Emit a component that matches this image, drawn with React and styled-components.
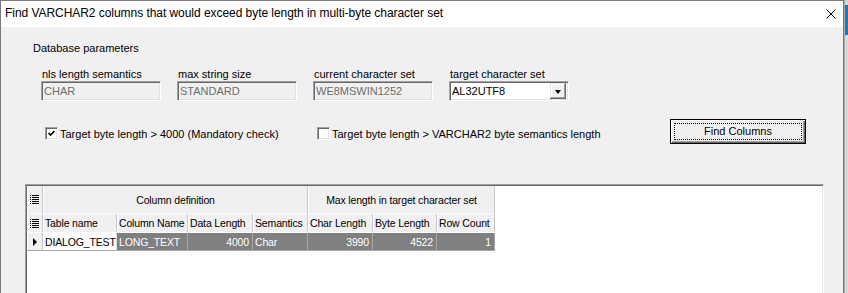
import React from "react";
import styled, { createGlobalStyle } from "styled-components";

const GlobalStyle = createGlobalStyle`
  html, body {
    margin: 0;
    padding: 0;
    background: #f0f0f0;
  }
  body {
    font-family: "Liberation Sans", Arial, sans-serif;
    font-size: 11px;
    color: #000;
  }
  #root {
    height: 293px;
    overflow: hidden;
  }
`;

const Screen = styled.div`
  display: flex;
  height: 293px;
  overflow: hidden;
`;

const Window = styled.div`
  flex: 1;
  min-width: 0;
  display: flex;
  flex-direction: column;
  border: 1px solid #7a7a7a;
  border-bottom: none;
  background: #f0f0f0;
`;

const Backdrop = styled.div`
  width: 4px;
  display: flex;
  flex-direction: column;
  background: #d9d9d9;
  border-left: 1px solid #a8a8a8;
  box-sizing: border-box;
`;

const BackAccent = styled.div`
  height: 30px;
  margin-top: 5px;
  background: #1b78c8;
`;

const TitleBar = styled.div`
  height: 26px;
  flex-shrink: 0;
  display: flex;
  align-items: center;
  justify-content: space-between;
  padding: 0 7px 2px 4px;
  box-sizing: border-box;
  background: #fff;
  font-size: 12px;
  letter-spacing: -0.05px;
`;

const CloseIcon = styled.svg`
  width: 10px;
  height: 10px;
  margin-top: 2px;
`;

const Body = styled.div`
  flex: 1;
  display: flex;
  flex-direction: column;
  padding: 15px 0 0 24px;
  min-height: 0;
`;

const SectionTitle = styled.div`
  line-height: 13px;
  margin-left: 8px;
`;

const ParamsRow = styled.div`
  display: flex;
  gap: 16px;
  margin: 13px 0 0 16px;
`;

const Param = styled.div`
  width: 120px;
  display: flex;
  flex-direction: column;
`;

const ParamLabel = styled.div`
  line-height: 13px;
  margin-left: 1px;
`;

const Sunken = styled.div`
  height: 20px;
  box-sizing: border-box;
  border: 1px solid;
  border-color: #a0a0a0 #fff #fff #a0a0a0;
  box-shadow: inset 1px 1px #696969, inset -1px -1px #e3e3e3;
  display: flex;
  align-items: center;
  padding-left: 2px;
  background: ${(p) => (p.$disabled ? "#f0f0f0" : "#fff")};
  color: ${(p) => (p.$disabled ? "#6d6d6d" : "#000")};
`;

const ComboText = styled.span`
  flex: 1;
`;

const DropButton = styled.div`
  width: 16px;
  height: 16px;
  margin-right: 2px;
  box-sizing: border-box;
  background: #f0f0f0;
  box-shadow: inset -1px -1px #696969, inset 1px 1px #e3e3e3, inset -2px -2px #a0a0a0, inset 2px 2px #fff;
  display: flex;
  align-items: center;
  justify-content: center;
`;

const DownArrow = styled.div`
  width: 0;
  height: 0;
  border-left: 3.5px solid transparent;
  border-right: 3.5px solid transparent;
  border-top: 4px solid #000;
  margin-top: 1px;
`;

const CheckRow = styled.div`
  display: flex;
  align-items: flex-start;
  margin-top: 18px;
`;

const CheckItem = styled.label`
  width: ${(p) => p.$width}px;
  margin-top: 8px;
  margin-left: ${(p) => p.$offset || 0}px;
  display: flex;
  align-items: center;
  gap: 2px;
  height: 13px;
  white-space: nowrap;
`;

const CheckBox = styled.span`
  width: 13px;
  height: 13px;
  flex-shrink: 0;
  box-sizing: border-box;
  border: 1px solid;
  border-color: #a0a0a0 #fff #fff #a0a0a0;
  box-shadow: inset 1px 1px #696969, inset -1px -1px #e3e3e3;
  background: #fff;
  display: flex;
  align-items: center;
  justify-content: center;
`;

const DefaultButton = styled.div`
  width: 136px;
  height: 25px;
  box-sizing: border-box;
  border: 1px solid #000;
  background: #f0f0f0;
  box-shadow: inset 1px 1px #fff, inset -1px -1px #696969, inset -2px -2px #a0a0a0;
  padding: 3px;
  display: flex;
`;

const FocusRect = styled.div`
  flex: 1;
  border: 1px dotted #000;
  display: flex;
  align-items: center;
  justify-content: center;
  padding-bottom: 1px;
`;

const GridBox = styled.div`
  width: 799px;
  flex: 1;
  margin-top: 40px;
  box-sizing: border-box;
  border: 1px solid;
  border-color: #a0a0a0 #fff #fff #a0a0a0;
  border-bottom: none;
  box-shadow: inset 1px 1px #696969, inset -1px 0 #e3e3e3;
  background: #fff;
  padding: 1px 0 0 1px;
`;

const Table = styled.div`
  display: grid;
  grid-template-columns: 16px 74px 71px 65px 55px 65px 64px 58px;
  grid-template-rows: 28px 19px 18px;
  width: max-content;
  font-size: 10.5px;
  letter-spacing: -0.15px;
`;

const HeadCell = styled.div`
  grid-column: ${(p) => p.$span || "auto"};
  box-sizing: border-box;
  background: #f0f0f0;
  border-right: 1px solid #c8c8c8;
  border-bottom: 1px solid ${(p) => (p.$top ? "#fbfbfb" : "#fdfdfd")};
  box-shadow: inset 1px 0 #fff;
  display: flex;
  align-items: center;
  justify-content: ${(p) => (p.$center ? "center" : "flex-start")};
  padding: 0 1px 0 2px;
  white-space: nowrap;
  overflow: hidden;
`;

const IndicatorCell = styled(HeadCell)`
  justify-content: center;
  padding: 0;
  border-bottom-color: ${(p) => (p.$row ? "#a8a8a8" : "#fdfdfd")};
`;

const DataCell = styled.div`
  box-sizing: border-box;
  background: ${(p) => (p.$current ? "#fff" : "#808080")};
  color: ${(p) => (p.$current ? "#000" : "#fff")};
  border-right: 1px solid ${(p) => (p.$current ? "#d8d8d8" : "#a8a8a8")};
  border-bottom: 1px solid #a8a8a8;
  display: flex;
  align-items: center;
  justify-content: ${(p) => (p.$right ? "flex-end" : "flex-start")};
  padding: ${(p) => (p.$right ? "0 3px 0 0" : "0 0 0 2px")};
  white-space: nowrap;
  overflow: hidden;
`;

const RowPointer = styled.div`
  width: 0;
  height: 0;
  border-top: 4px solid transparent;
  border-bottom: 4px solid transparent;
  border-left: 4px solid #000;
  margin-left: 1px;
`;

function ListIcon() {
  return (
    <svg width="9" height="9" viewBox="0 0 9 9">
      {[0, 2, 4, 6, 8].map((y) => (
        <g key={y} fill="#000">
          <rect x="0" y={y} width="1" height="1" />
          <rect x="2" y={y} width="7" height="1" />
        </g>
      ))}
    </svg>
  );
}

function CheckMark() {
  return (
    <svg width="9" height="9" viewBox="0 0 9 9">
      <path d="M1.5 4 L3.5 6 L7.5 2" fill="none" stroke="#000" strokeWidth="1.7" />
    </svg>
  );
}

const params = [
  { label: "nls length semantics", value: "CHAR" },
  { label: "max string size", value: "STANDARD" },
  { label: "current character set", value: "WE8MSWIN1252" },
];

const columns = ["Table name", "Column Name", "Data Length", "Semantics", "Char Length", "Byte Length", "Row Count"];

const row = [
  { v: "DIALOG_TEST", current: true },
  { v: "LONG_TEXT" },
  { v: "4000", right: true },
  { v: "Char" },
  { v: "3990", right: true },
  { v: "4522", right: true },
  { v: "1", right: true },
];

export default function App() {
  return (
    <Screen>
      <GlobalStyle />
      <Window>
        <TitleBar>
          <span>Find VARCHAR2 columns that would exceed byte length in multi-byte character set</span>
          <CloseIcon viewBox="0 0 10 10">
            <path d="M0.5 0.5 L9.5 9.5 M9.5 0.5 L0.5 9.5" stroke="#000" strokeWidth="1" />
          </CloseIcon>
        </TitleBar>
        <Body>
          <SectionTitle>Database parameters</SectionTitle>
          <ParamsRow>
            {params.map((p) => (
              <Param key={p.label}>
                <ParamLabel>{p.label}</ParamLabel>
                <Sunken $disabled>{p.value}</Sunken>
              </Param>
            ))}
            <Param>
              <ParamLabel>target character set</ParamLabel>
              <Sunken>
                <ComboText>AL32UTF8</ComboText>
                <DropButton>
                  <DownArrow />
                </DropButton>
              </Sunken>
            </Param>
          </ParamsRow>
          <CheckRow>
            <CheckItem $width={272} $offset={20}>
              <CheckBox>
                <CheckMark />
              </CheckBox>
              Target byte length &gt; 4000 (Mandatory check)
            </CheckItem>
            <CheckItem $width={353}>
              <CheckBox />
              Target byte length &gt; VARCHAR2 byte semantics length
            </CheckItem>
            <DefaultButton>
              <FocusRect>Find Columns</FocusRect>
            </DefaultButton>
          </CheckRow>
          <GridBox>
            <Table>
              <IndicatorCell>
                <ListIcon />
              </IndicatorCell>
              <HeadCell $span="2 / 6" $center $top>Column definition</HeadCell>
              <HeadCell $span="6 / 9" $center $top>Max length in target character set</HeadCell>
              <IndicatorCell>
                <ListIcon />
              </IndicatorCell>
              {columns.map((c) => (
                <HeadCell key={c}>{c}</HeadCell>
              ))}
              <IndicatorCell $row>
                <RowPointer />
              </IndicatorCell>
              {row.map((c, i) => (
                <DataCell key={i} $current={c.current} $right={c.right}>
                  {c.v}
                </DataCell>
              ))}
            </Table>
          </GridBox>
        </Body>
      </Window>
      <Backdrop>
        <BackAccent />
      </Backdrop>
    </Screen>
  );
}
